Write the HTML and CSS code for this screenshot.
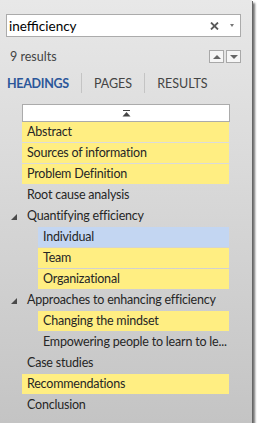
FILE: index.html
```html
<!DOCTYPE html>
<html lang="en">
<head>
    <meta charset="UTF-8">
    <meta name="viewport" content="width=device-width, initial-scale=1.0">
    <title>Navigation</title>
    <link rel="stylesheet" href="styles.css">
</head>
<body>

    <!-- Navigation pane -->
    <div class="pane">

        <!-- Search box -->
        <div class="search">
            <span class="search-text">inefficiency</span>
            <svg class="search-clear" width="9" height="8" viewBox="0 0 9 8">
                <path d="M1 0.5 L8 7.5 M8 0.5 L1 7.5" stroke="#5a5a5a" stroke-width="1.8"/>
            </svg>
            <span class="search-drop"></span>
        </div>

        <!-- Result count + prev/next -->
        <div class="result-bar">
            <span class="result-count">9 results</span>
            <div class="nav-btns">
                <button class="nav-btn"><span class="tri-up"></span></button>
                <button class="nav-btn"><span class="tri-down"></span></button>
            </div>
        </div>

        <!-- Tabs -->
        <div class="tabs">
            <span class="tab active">HEADINGS</span>
            <span class="tab-sep"></span>
            <span class="tab">PAGES</span>
            <span class="tab-sep"></span>
            <span class="tab">RESULTS</span>
        </div>

        <!-- Headings tree -->
        <div class="tree">
            <div class="to-top">
                <svg width="9" height="7" viewBox="0 0 9 7">
                    <rect x="1" y="0" width="7" height="1" fill="#444"/>
                    <polygon points="4.5,2 8.5,6.5 0.5,6.5" fill="#444"/>
                </svg>
            </div>

            <div class="row hit">Abstract</div>
            <div class="row hit">Sources of information</div>
            <div class="row hit">Problem Definition</div>
            <div class="row">Root cause analysis</div>
            <div class="row parent"><span class="expander"></span>Quantifying efficiency</div>
            <div class="row sub current">Individual</div>
            <div class="row sub hit">Team</div>
            <div class="row sub hit">Organizational</div>
            <div class="row parent"><span class="expander"></span>Approaches to enhancing efficiency</div>
            <div class="row sub hit">Changing the mindset</div>
            <div class="row sub">Empowering people to learn to le...</div>
            <div class="row">Case studies</div>
            <div class="row hit">Recommendations</div>
            <div class="row">Conclusion</div>
        </div>

    </div>

</body>
</html>
```

FILE: styles.css
```css
body {
    margin: 0;
    background: #ffffff;
    font-family: "Segoe UI", Lato, "Noto Sans", sans-serif;
    color: #262626;
}

/* Pane with drop shadow */
.pane {
    width: 252px;
    height: 423px;
    background: linear-gradient(#e8e8e8, #c4c4c4);
    box-shadow: 1px 1px 0 #666, 3px 3px 2px rgba(0, 0, 0, 0.55);
    box-sizing: border-box;
    padding-top: 14px;
}

/* Search box */
.search {
    margin-left: 6px;
    width: 235px;
    height: 23px;
    box-sizing: border-box;
    border: 1px solid #ababab;
    background: #fff;
    display: flex;
    align-items: center;
    padding: 0 6px 0 2px;
}

.search-text {
    flex: 1;
    font-size: 13.5px;
    color: #000;
}

.search-clear {
    margin-right: 11px;
}

.search-drop {
    width: 0;
    height: 0;
    border-left: 2.5px solid transparent;
    border-right: 2.5px solid transparent;
    border-top: 3px solid #777;
}

/* Result count row */
.result-bar {
    display: flex;
    align-items: center;
    justify-content: space-between;
    margin: 13px 0 0 10px;
    width: 231px;
    height: 13px;
}

.result-count {
    font-size: 12.5px;
    color: #444;
}

.nav-btns {
    display: flex;
    gap: 2px;
}

.nav-btn {
    width: 15px;
    height: 13px;
    padding: 0;
    border: 1px solid #a8a8a8;
    background: #f6f6f6;
    display: flex;
    align-items: center;
    justify-content: center;
}

.tri-up,
.tri-down {
    width: 0;
    height: 0;
    border-left: 4px solid transparent;
    border-right: 4px solid transparent;
}

.tri-up {
    border-bottom: 4px solid #666;
}

.tri-down {
    border-top: 4px solid #666;
}

/* Tabs */
.tabs {
    display: flex;
    align-items: center;
    margin: 10px 0 0 7px;
    height: 20px;
}

.tab {
    font-size: 12.5px;
    color: #444;
}

.tab.active {
    color: #2b579a;
    font-weight: bold;
    letter-spacing: -0.3px;
}

.tab-sep {
    width: 1px;
    height: 20px;
    background: #c4c4c4;
    margin: 0 12px;
}

/* Headings tree */
.tree {
    margin-top: 11px;
    display: flex;
    flex-direction: column;
    gap: 1px;
}

.to-top {
    margin-left: 22px;
    width: 208px;
    height: 18px;
    box-sizing: border-box;
    border: 1px solid #ababab;
    background: #fff;
    display: flex;
    align-items: center;
    justify-content: center;
    margin-bottom: -1px;
}

.row {
    position: relative;
    margin-left: 22px;
    width: 207px;
    height: 20px;
    box-sizing: border-box;
    padding-left: 5px;
    font-size: 12.5px;
    letter-spacing: -0.2px;
    line-height: 20px;
    white-space: nowrap;
    overflow: hidden;
    text-overflow: ellipsis;
}

.row.sub {
    margin-left: 38px;
    width: 191px;
}

.row.hit {
    background: #ffee82;
}

.row.current {
    background: #c3d6f2;
}

.row.parent {
    overflow: visible;
}

/* small expanded-state triangle to the left of the row */
.expander {
    position: absolute;
    left: -11px;
    top: 8px;
    width: 0;
    height: 0;
    border-left: 6px solid transparent;
    border-bottom: 6px solid #4a4a4a;
}
```
